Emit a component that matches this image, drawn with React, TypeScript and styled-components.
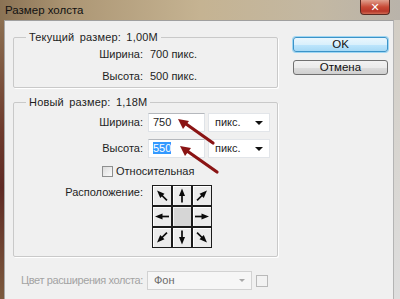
import styled, { createGlobalStyle } from 'styled-components';

const GlobalStyle = createGlobalStyle`
  html, body {
    margin: 0;
    padding: 0;
  }
  body {
    width: 400px;
    height: 299px;
    overflow: hidden;
    background: #f0f0f0;
  }
  * {
    box-sizing: border-box;
  }
`;

const Window = styled.div`
  position: relative;
  width: 400px;
  height: 299px;
  display: flex;
  flex-direction: column;
  overflow: hidden;
  font-family: 'Liberation Sans', 'DejaVu Sans', sans-serif;
  font-size: 11px;
  line-height: 13px;
  color: #1e1e1e;
`;

const TitleBar = styled.div`
  height: 20px;
  flex-shrink: 0;
  display: flex;
  align-items: flex-start;
  background: linear-gradient(
    90deg,
    #8a7254 0%,
    #ad9775 18%,
    #c5b392 50%,
    #c3b8a3 80%,
    #b9b3aa 100%
  );
`;

const Title = styled.div`
  padding: 4px 0 0 5px;
  font-size: 11.5px;
  color: #111;
`;

const CloseButton = styled.div`
  margin-left: auto;
  margin-right: 10px;
  width: 30px;
  height: 15px;
  border: 1px solid #5a2a22;
  border-top: none;
  border-radius: 0 0 4px 4px;
  background: linear-gradient(#e0a08e, #c84a36 50%, #b8382a 80%, #d06a52);
  color: #fff;
  font-weight: bold;
  font-size: 11px;
  display: flex;
  align-items: center;
  justify-content: center;
`;

const Body = styled.div`
  flex: 1;
  display: flex;
`;

const LeftFrame = styled.div`
  width: 4px;
  background: linear-gradient(#8c7052, #6e3a2c 40%, #5e2a24 60%, #7c5a3e);
`;

const RightFrame = styled.div`
  width: 6px;
  background: linear-gradient(#d2cdc4, #dedede);
`;

const Client = styled.div`
  flex: 1;
  display: flex;
  padding: 10px 0 0 8px;
  background: #f0f0f0;
  border-top: 1px solid #a0a0a0;
  border-left: 1px solid #a8a8a8;
  border-right: 1px solid #b4b4b4;
`;

const LeftColumn = styled.div`
  width: 265px;
  display: flex;
  flex-direction: column;
`;

const RightColumn = styled.div`
  width: 95px;
  margin-left: 15px;
  padding-top: 6px;
  display: flex;
  flex-direction: column;
  gap: 8px;
`;

const GroupBox = styled.fieldset<{ $pad: number; $gap?: number }>`
  margin: ${(p) => p.$gap || 0}px 0 0 0;
  padding: 4px 0 ${(p) => p.$pad}px 0;
  min-inline-size: 0;
  border: 1px solid #c9c9c9;
  border-radius: 2px;
  box-shadow: 1px 1px 0 #fff;
`;

const Legend = styled.legend`
  margin-left: 12px;
  padding: 0 3px;
  line-height: 13px;
  letter-spacing: 0.2px;
  word-spacing: 2px;
`;

const InfoGrid = styled.div`
  display: grid;
  grid-template-columns: 129px auto;
  column-gap: 7px;
  row-gap: 9px;
`;

const FormGrid = styled.div`
  display: grid;
  grid-template-columns: 129px auto;
  column-gap: 5px;
  row-gap: 7px;
`;

const Label = styled.div`
  text-align: right;
  align-self: center;
`;

const TopLabel = styled.div`
  text-align: right;
  padding-top: 1px;
`;

const Controls = styled.div`
  display: flex;
  gap: 3px;
`;

const TextInput = styled.div`
  width: 57px;
  height: 19px;
  padding: 2px 0 0 4px;
  background: #fff;
  border: 1px solid #dfe3e8;
  border-top-color: #b5b8bd;
`;

const Selected = styled.span`
  background: #3399ff;
  color: #fff;
`;

const Select = styled.div<{ $w: number; $disabled?: boolean }>`
  width: ${(p) => p.$w}px;
  height: 19px;
  display: flex;
  align-items: center;
  justify-content: space-between;
  padding: 0 4px 0 6px;
  background: ${(p) => (p.$disabled ? '#f6f6f6' : '#fff')};
  border: 1px solid ${(p) => (p.$disabled ? '#d2d2d2' : '#e2e5e9')};
  color: ${(p) => (p.$disabled ? '#6a6a6a' : '#1e1e1e')};
`;

const Caret = styled.span<{ $disabled?: boolean }>`
  width: 0;
  height: 0;
  border-left: ${(p) => (p.$disabled ? 3 : 4)}px solid transparent;
  border-right: ${(p) => (p.$disabled ? 3 : 4)}px solid transparent;
  border-top: ${(p) => (p.$disabled ? 3 : 4)}px solid
    ${(p) => (p.$disabled ? '#a8a8a8' : '#111')};
  margin-right: 2px;
`;

const CheckRow = styled.div`
  grid-column: 1 / 3;
  display: flex;
  align-items: center;
  gap: 3px;
  padding-left: 88px;
  height: 13px;
`;

const CheckBox = styled.div`
  width: 11px;
  height: 11px;
  border: 1px solid #8e8f8f;
  background: linear-gradient(135deg, #dcdcdc, #fbfbfb);
`;

const AnchorGrid = styled.div`
  margin-left: 4px;
  display: grid;
  grid-template-columns: repeat(3, 20px);
  grid-template-rows: repeat(3, 21px);
`;

const AnchorCell = styled.div<{ $center?: boolean }>`
  display: flex;
  align-items: center;
  justify-content: center;
  border: 1px solid #1c1c1c;
  background: ${(p) => (p.$center ? '#d6d6d6' : '#ececec')};
  box-shadow: inset 1px 1px 0 ${(p) => (p.$center ? '#f4f4f4' : '#fff')};
`;

const BottomRow = styled.div`
  margin-top: 14px;
  display: flex;
  align-items: center;
  gap: 4px;
`;

const DisabledLabel = styled.div`
  width: 130px;
  display: flex;
  justify-content: flex-end;
  white-space: nowrap;
  letter-spacing: -0.4px;
  color: #a3a3a3;
`;

const Swatch = styled.div`
  width: 12px;
  height: 12px;
  border: 1px solid #b9b9b9;
  background: #f2f2f2;
`;

const Button = styled.div<{ $default?: boolean }>`
  height: 15px;
  display: flex;
  align-items: center;
  justify-content: center;
  border: 1px solid ${(p) => (p.$default ? '#3c93c8' : '#707070')};
  border-radius: 3px;
  background: ${(p) =>
    p.$default
      ? 'linear-gradient(#eaf6fd, #d9f0fc 50%, #bee6fd 51%, #a7d9f5)'
      : 'linear-gradient(#f2f2f2, #ebebeb 50%, #dddddd 51%, #cfcfcf)'};
  box-shadow: ${(p) => (p.$default ? '0 0 0 1px #9fd6f2' : 'none')};
  color: #111;
  font-size: 11.5px;
`;

const Overlay = styled.svg`
  position: absolute;
  left: 0;
  top: 0;
  pointer-events: none;
`;

const anchorAngles: (number | null)[] = [-45, 0, 45, -90, null, 90, -135, 180, 135];

function Arrow({ angle }: { angle: number }) {
  return (
    <svg width="18" height="19" viewBox="0 0 18 19">
      <g transform={`rotate(${angle} 9 9.5)`}>
        <line x1="9" y1="16.5" x2="9" y2="7" stroke="#0a0a0a" strokeWidth="1.7" />
        <polygon points="9,2.5 6,10 12,10" fill="#0a0a0a" />
      </g>
    </svg>
  );
}

function App() {
  return (
    <>
      <GlobalStyle />
      <Window>
        <TitleBar>
          <Title>Размер холста</Title>
          <CloseButton>✕</CloseButton>
        </TitleBar>
        <Body>
          <LeftFrame />
          <Client>
            <LeftColumn>
              <GroupBox $pad={4}>
                <Legend>Текущий размер: 1,00М</Legend>
                <InfoGrid>
                  <Label>Ширина:</Label>
                  <div>700 пикс.</div>
                  <Label>Высота:</Label>
                  <div>500 пикс.</div>
                </InfoGrid>
              </GroupBox>
              <GroupBox $pad={8} $gap={8}>
                <Legend>Новый размер: 1,18М</Legend>
                <FormGrid>
                  <Label>Ширина:</Label>
                  <Controls>
                    <TextInput>750</TextInput>
                    <Select $w={62}>
                      пикс.
                      <Caret />
                    </Select>
                  </Controls>
                  <Label>Высота:</Label>
                  <Controls>
                    <TextInput>
                      <Selected>550</Selected>
                    </TextInput>
                    <Select $w={62}>
                      пикс.
                      <Caret />
                    </Select>
                  </Controls>
                  <CheckRow>
                    <CheckBox />
                    Относительная
                  </CheckRow>
                  <TopLabel>Расположение:</TopLabel>
                  <AnchorGrid>
                    {anchorAngles.map((a, i) => (
                      <AnchorCell key={i} $center={a === null}>
                        {a !== null && <Arrow angle={a} />}
                      </AnchorCell>
                    ))}
                  </AnchorGrid>
                </FormGrid>
              </GroupBox>
              <BottomRow>
                <DisabledLabel>Цвет расширения холста:</DisabledLabel>
                <Select $w={105} $disabled>
                  Фон
                  <Caret $disabled />
                </Select>
                <Swatch />
              </BottomRow>
            </LeftColumn>
            <RightColumn>
              <Button $default>OK</Button>
              <Button>Отмена</Button>
            </RightColumn>
          </Client>
          <RightFrame />
        </Body>
        <Overlay width="400" height="299" viewBox="0 0 400 299">
          <line x1="213" y1="143" x2="184" y2="122.5" stroke="#8a1414" strokeWidth="3.2" strokeLinecap="round" />
          <polygon points="178,119 189,121 183,129" fill="#8a1414" />
          <line x1="217" y1="172" x2="185" y2="149.5" stroke="#8a1414" strokeWidth="3.2" strokeLinecap="round" />
          <polygon points="180,146 191,148 185,156" fill="#8a1414" />
        </Overlay>
      </Window>
    </>
  );
}

export default App;
